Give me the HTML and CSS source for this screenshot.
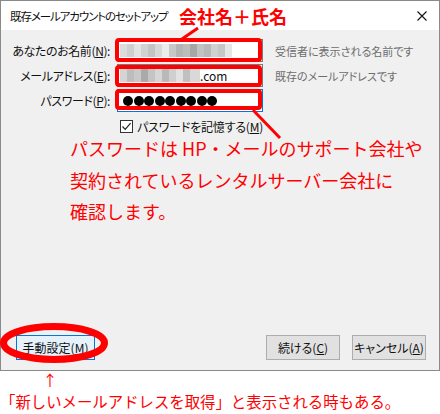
FILE: index.html
```html
<!DOCTYPE html>
<html lang="ja">
<head>
    <meta charset="UTF-8">
    <meta name="viewport" content="width=device-width, initial-scale=1.0">
    <title>既存メールアカウントのセットアップ</title>
    <link rel="stylesheet" href="styles.css">
</head>
<body>
    <div class="page">
        <div class="window">
            <div class="titlebar">
                <span class="title">既存メールアカウントのセットアップ</span>
                <svg class="close-icon" width="10" height="10" viewBox="0 0 10 10">
                    <path d="M0.5 0.5 L9.5 9.5 M9.5 0.5 L0.5 9.5" stroke="#111" stroke-width="1.1" fill="none"/>
                </svg>
            </div>

            <div class="dialog-body">
                <div class="form">
                    <label class="field-label">あなたのお名前(<u>N</u>):</label>
                    <div class="textbox"><span class="mosaic mosaic-name"></span></div>
                    <span class="hint">受信者に表示される名前です</span>

                    <label class="field-label">メールアドレス(<u>E</u>):</label>
                    <div class="textbox"><span class="mosaic mosaic-mail"></span><span class="domain">.com</span></div>
                    <span class="hint">既存のメールアドレスです</span>

                    <label class="field-label">パスワード(<u>P</u>):</label>
                    <div class="textbox focused">
                        <span class="dots">
                            <i></i><i></i><i></i><i></i><i></i><i></i><i></i><i></i><i></i>
                        </span>
                    </div>
                    <span class="hint"></span>
                </div>

                <label class="remember">
                    <span class="checkbox">
                        <svg width="11" height="11" viewBox="0 0 11 11">
                            <path d="M1.5 5.5 L4.2 8.3 L9.6 2.2" stroke="#222" stroke-width="1.2" fill="none"/>
                        </svg>
                    </span>
                    <span>パスワードを記憶する(<u>M</u>)</span>
                </label>

                <p class="note">パスワードは HP・メールのサポート会社や<br>契約されているレンタルサーバー会社に<br>確認します。</p>

                <div class="buttons">
                    <button class="btn btn-default">手動設定(<u>M</u>)</button>
                    <div class="spacer"></div>
                    <button class="btn">続ける(<u>C</u>)</button>
                    <button class="btn">キャンセル(<u>A</u>)</button>
                </div>
            </div>
        </div>

        <div class="footnote">
            <div class="arrow">↑</div>
            <p>「新しいメールアドレスを取得」と表示される時もある。</p>
        </div>

        <!-- annotations drawn over the screenshot -->
        <div class="callout-title">会社名＋氏名</div>
        <svg class="marks" width="440" height="414" viewBox="0 0 440 414">
            <g fill="none" stroke="#ff0000">
                <rect x="117" y="40" width="143" height="20" rx="2" stroke-width="4"/>
                <rect x="117" y="67" width="143" height="18" rx="2" stroke-width="4"/>
                <rect x="117" y="91" width="143" height="17" rx="2" stroke-width="4"/>
                <line x1="182" y1="39" x2="198" y2="28" stroke-width="3"/>
                <line x1="253" y1="110" x2="280" y2="138" stroke-width="3"/>
                <ellipse cx="54" cy="343" rx="50.5" ry="16.5" stroke-width="7"/>
            </g>
        </svg>
    </div>
</body>
</html>
```

FILE: styles.css
```css
:root {
    --red: #ff0000;
    --panel: #f0f0f0;
    --frame: #8a8a8a;
    --hint: #6d6d6d;
    --accent: #0078d7;
}

* {
    box-sizing: border-box;
    margin: 0;
    padding: 0;
}

body {
    font-family: "Noto Sans CJK JP", sans-serif;
    background-color: white;
    color: #000;
    width: 440px;
    height: 414px;
    overflow: hidden;
}

.page {
    position: relative;
    width: 440px;
    height: 414px;
}

.window {
    width: 440px;
    height: 371px;
    border: 1px solid var(--frame);
    display: flex;
    flex-direction: column;
}

.titlebar {
    height: 29px;
    background-color: white;
    display: flex;
    align-items: center;
    justify-content: space-between;
    padding: 0 12px 0 9px;
}

.title {
    font-size: 11.5px;
    letter-spacing: -1.1px;
    font-feature-settings: "palt";
    color: #111;
}

.dialog-body {
    flex: 1;
    background-color: var(--panel);
    display: flex;
    flex-direction: column;
    padding-top: 9px;
}

.form {
    display: grid;
    grid-template-columns: 109px 146px 1fr;
    grid-auto-rows: 23px;
    row-gap: 2px;
    column-gap: 7px;
    align-items: center;
    font-size: 12px;
    font-feature-settings: "palt";
}

.field-label {
    text-align: right;
    letter-spacing: -0.4px;
    color: #111;
}

.textbox {
    height: 23px;
    background-color: white;
    border: 1px solid #7a7a7a;
    display: flex;
    align-items: center;
    padding-left: 2px;
}

.textbox.focused {
    border-color: var(--accent);
}

.hint {
    margin-left: 5px;
    font-size: 11px;
    color: var(--hint);
}

.mosaic {
    display: inline-block;
    height: 13px;
}

.mosaic-name {
    width: 112px;
    background: linear-gradient(to right,
        #dcdcdc 0 7px, #cfcfcf 7px 14px, #e4e4e4 14px 21px, #d2d2d2 21px 28px,
        #c4c4c4 28px 35px, #d8d8d8 35px 42px, #ececec 42px 49px, #c8c8c8 49px 56px,
        #b4b4b4 56px 63px, #bcbcbc 63px 70px, #a6a6a6 70px 77px, #c2c2c2 77px 84px,
        #b8b8b8 84px 91px, #d0d0d0 91px 98px, #c6c6c6 98px 105px, #e6e6e6 105px 112px);
}

.mosaic-mail {
    width: 80px;
    background: linear-gradient(to right,
        #d4d4d4 0 7px, #bdbdbd 7px 14px, #c9c9c9 14px 21px, #aaaaaa 21px 28px,
        #c4c4c4 28px 35px, #d6d6d6 35px 42px, #b9b9b9 42px 49px, #cfcfcf 49px 56px,
        #e2e2e2 56px 63px, #c0c0c0 63px 70px, #d9d9d9 70px 80px);
}

.domain {
    font-size: 12px;
    color: #111;
}

.dots {
    display: flex;
    gap: 0.5px;
    padding-left: 3px;
}

.dots i {
    width: 10px;
    height: 10px;
    border-radius: 50%;
    background-color: #000;
}

.remember {
    display: flex;
    align-items: center;
    gap: 4px;
    height: 13px;
    margin: 8px 0 0 119px;
    font-size: 12px;
    line-height: 12px;
    letter-spacing: -0.2px;
    font-feature-settings: "palt";
    color: #111;
}

.checkbox {
    width: 13px;
    height: 13px;
    border: 1px solid #333;
    background-color: white;
    display: flex;
    align-items: center;
    justify-content: center;
}

.note {
    font-size: 18px;
    line-height: 31.5px;
    margin-left: 69px;
    color: var(--red);
}

.buttons {
    margin-top: auto;
    display: flex;
    gap: 12px;
    padding: 0 13px 10px 15px;
}

.spacer {
    flex: 1;
}

.btn {
    width: 74px;
    height: 25px;
    background-color: #e1e1e1;
    border: 1px solid #adadad;
    font-family: inherit;
    font-size: 12px;
    font-feature-settings: "palt";
    color: #111;
}

.btn-default {
    width: 79px;
    background-color: #e5f1fb;
    border-color: var(--accent);
}

.footnote {
    color: var(--red);
}

.arrow {
    width: 100px;
    text-align: center;
    font-size: 15px;
    line-height: 18px;
}

.footnote p {
    margin-top: 1px;
    font-size: 15.4px;
    line-height: 22px;
    white-space: nowrap;
}

.callout-title {
    position: absolute;
    left: 179px;
    top: 3px;
    font-size: 18px;
    font-weight: bold;
    line-height: 26px;
    color: var(--red);
}

.marks {
    position: absolute;
    top: 0;
    left: 0;
    pointer-events: none;
}
```
